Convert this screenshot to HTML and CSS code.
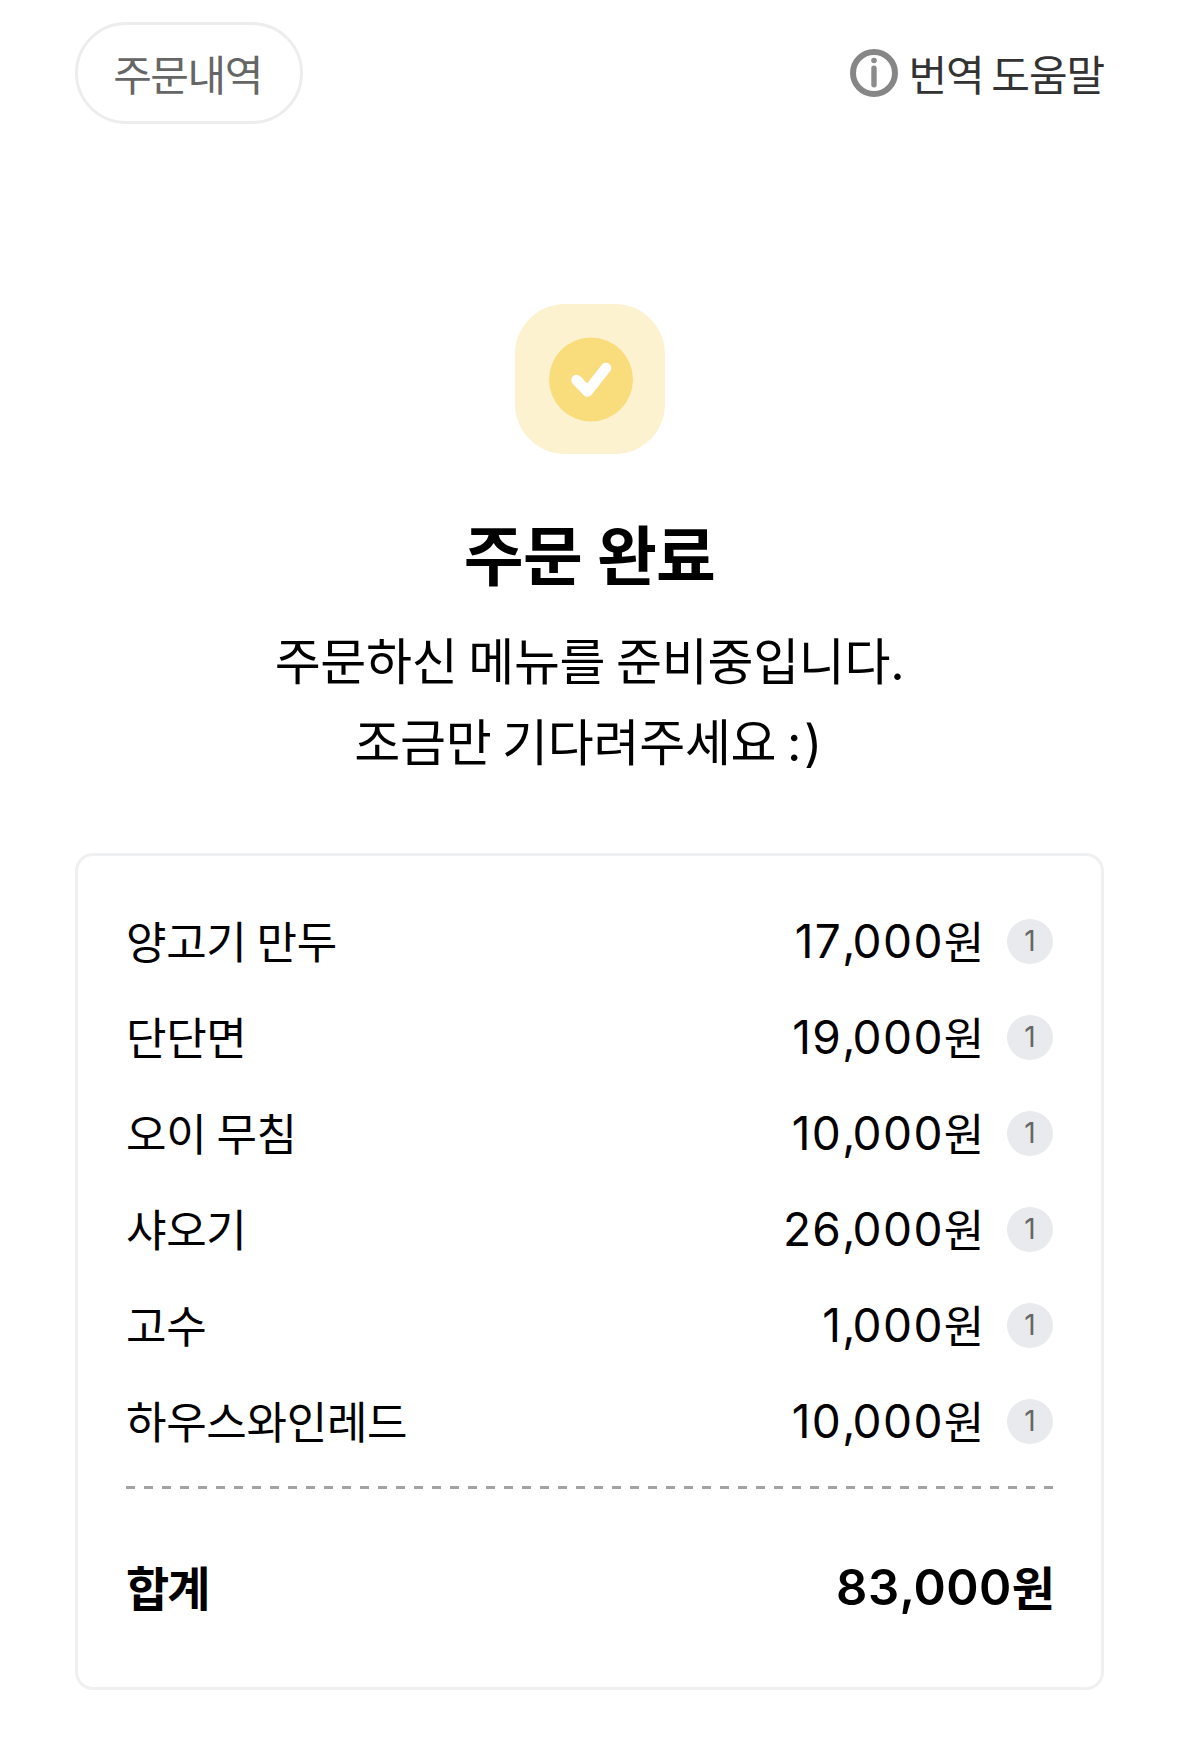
FILE: index.html
```html
<!DOCTYPE html>
<html lang="ko">
<head>
    <meta charset="utf-8">
    <meta name="viewport" content="width=device-width, initial-scale=1">
    <title>주문 완료</title>
    <link rel="stylesheet" href="styles.css">
</head>
<body>

<header class="top-bar">
    <a class="history-button" href="#">주문내역</a>
    <a class="help-link" href="#">
        <svg class="help-icon" viewBox="0 0 48 48">
            <circle cx="24" cy="24" r="21" fill="none" stroke="#868686" stroke-width="6"/>
            <circle cx="24" cy="11.5" r="2.8" fill="#8c8c8c"/>
            <rect x="21.300" y="16.500" width="5.400" height="22" rx="2.700" fill="#8c8c8c"/>
        </svg>
        <span>번역 도움말</span>
    </a>
</header>

<section class="status">
    <svg class="status-icon" viewBox="0 0 150 150">
        <rect width="150" height="150" rx="50" fill="#fcf2d0"/>
        <circle cx="76" cy="75.500" r="42" fill="#f9dc7c"/>
        <path d="M61.500 76l11 11.500L91 64" fill="none" stroke="#fff" stroke-width="10.500" stroke-linecap="round" stroke-linejoin="round"/>
    </svg>
    <h1>주문 완료</h1>
    <p>주문하신 메뉴를 준비중입니다.</p>
    <p>조금만 기다려주세요 <span class="smile">:)</span></p>
</section>

<section class="receipt">
    <ul class="items">
        <li><span class="name">양고기 만두</span><span class="price"><b>17<i>,</i>000</b>원</span><span class="count">1</span></li>
        <li><span class="name">단단면</span><span class="price"><b>19<i>,</i>000</b>원</span><span class="count">1</span></li>
        <li><span class="name">오이 무침</span><span class="price"><b>10<i>,</i>000</b>원</span><span class="count">1</span></li>
        <li><span class="name">샤오기</span><span class="price"><b>26<i>,</i>000</b>원</span><span class="count">1</span></li>
        <li><span class="name">고수</span><span class="price"><b>1<i>,</i>000</b>원</span><span class="count">1</span></li>
        <li><span class="name">하우스와인레드</span><span class="price"><b>10<i>,</i>000</b>원</span><span class="count">1</span></li>
    </ul>
    <svg class="divider" viewBox="0 0 927 3">
        <line x1="0" y1="1.500" x2="927" y2="1.500" stroke="#a3a3a3" stroke-width="3" stroke-dasharray="9 9"/>
    </svg>
    <div class="total">
        <span class="total-label">합계</span>
        <span class="total-price"><b>83<i>,</i>000</b>원</span>
    </div>
</section>

</body>
</html>
```
FILE: styles.css
```css
* {
    box-sizing: border-box;
}

body {
    margin: 0;
    padding: 22px 75px 0;
    background-color: #fff;
    color: #000;
    font-family: Inter, "Noto Sans CJK KR", sans-serif;
}

a {
    color: inherit;
    text-decoration: none;
}

.top-bar {
    display: flex;
    justify-content: space-between;
    align-items: center;
    height: 102px;
    font-size: 42px;
    letter-spacing: -1.5px;
}

.history-button {
    display: flex;
    justify-content: center;
    align-items: center;
    width: 228px;
    height: 102px;
    padding: 0 3px 1px 0;
    border: 3px solid #ededed;
    border-radius: 51px;
    color: #666;
}

.help-link {
    display: flex;
    align-items: center;
    gap: 11px;
    color: #333;
    letter-spacing: -1.1px;
    word-spacing: -3px;
}

.help-link span {
    padding-bottom: 1px; /* Lift the text a little next to the icon */
}

.help-icon {
    width: 48px;
    height: 48px;
}

.status {
    display: flex;
    flex-direction: column;
    align-items: center;
    padding-top: 180px;
}

.status-icon {
    width: 150px;
    height: 150px;
}

.status h1 {
    margin: 57px 0 19px;
    font-size: 65px;
    line-height: 92px;
    font-weight: 700;
    letter-spacing: -0.6px;
}

.status p {
    margin: 0;
    font-size: 50px;
    line-height: 81px;
    letter-spacing: -0.3px;
    word-spacing: -3px;
}

.smile {
    letter-spacing: 2.5px;
}

.receipt {
    height: 837px;
    margin-top: 69px;
    padding: 37px 48px 0;
    border: 3px solid #eff0f1;
    border-radius: 18px;
}

.items {
    margin: 0;
    padding: 0;
    list-style: none;
}

.items li {
    display: flex;
    align-items: center;
    height: 96px;
    font-size: 44px;
    letter-spacing: -0.3px;
    word-spacing: -2px;
}

.name {
    flex: 1;
}

.name,
.price {
    padding-bottom: 2px;
}

.price b {
    font-size: 46px;
    font-weight: 400;
    line-height: 0;
    letter-spacing: 1.4px;
    vertical-align: 1px;
}

.price i {
    font-style: normal;
    letter-spacing: -3px;
}

.count {
    display: flex;
    justify-content: center;
    align-items: center;
    width: 46px;
    height: 45px;
    margin-left: 23px;
    border-radius: 50%;
    background-color: #e9eaed;
    color: #666;
    font-size: 28px;
    letter-spacing: 0;
}

.divider {
    display: block;
    width: 100%;
    height: 3px;
    margin-top: 17px;
}

.total {
    display: flex;
    justify-content: space-between;
    align-items: center;
    height: 193px;
    font-size: 47px;
    font-weight: 700;
    letter-spacing: -2px;
}

.total-price b {
    font-size: 49px;
    font-weight: 600;
    line-height: 0;
    letter-spacing: 0.4px;
    vertical-align: 1px;
}

.total-price i {
    font-style: normal;
    letter-spacing: -1.5px;
}
```
